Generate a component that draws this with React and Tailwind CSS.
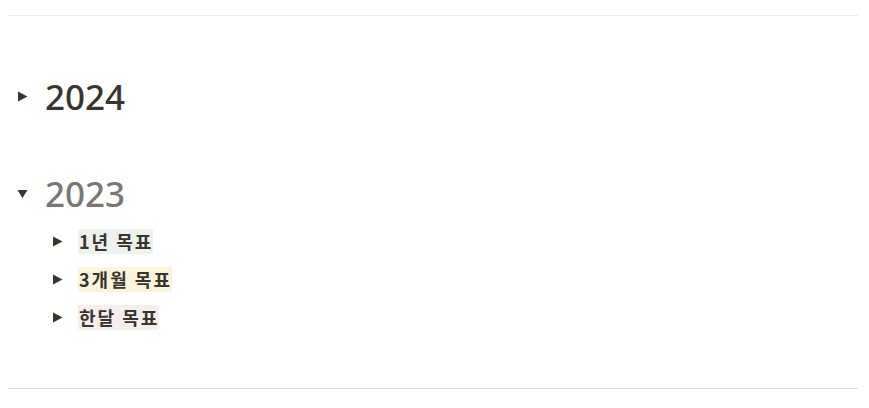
export default function App() {
  const Tri = ({ down }) => (
    <svg width="11" height="11" viewBox="0 0 11 11">
      {down ? <polygon points="0.5,2 10.5,2 5.5,10" fill="currentColor" /> : <polygon points="1,0.5 10.5,5.5 1,10.5" fill="currentColor" />}
    </svg>
  );
  const items = [
    { t: "1년 목표", bg: "bg-[#edf3ec]" },
    { t: "3개월 목표", bg: "bg-[#fbf3db]" },
    { t: "한달 목표", bg: "bg-[#f8eded]" },
  ];
  return (
    <div className="w-[869px] h-[408px] bg-white px-2 pt-[15px] overflow-hidden" style={{ fontFamily: '"Noto Sans", "Noto Sans CJK KR", sans-serif' }}>
      <div className="h-px w-[850px] bg-[#ececec]" />
      <div className="mt-[60px] h-10 flex items-center">
        <div className="w-[37px] flex justify-start pl-[9px] text-[#37352f]">
          <Tri />
        </div>
        <span className="text-[35px] font-medium text-[#37352f] leading-none">2024</span>
      </div>
      <div className="mt-[57px] h-10 flex items-center">
        <div className="w-[37px] flex justify-start pl-[9px] text-[#37352f]">
          <Tri down />
        </div>
        <span className="text-[35px] font-medium text-[#787774] leading-none">2023</span>
      </div>
      <div className="mt-[13px] flex flex-col gap-2 pl-[44px]">
        {items.map((it) => (
          <div key={it.t} className="h-[30px] flex items-center">
            <div className="w-[26px] text-[#37352f]">
              <Tri />
            </div>
            <span className={`${it.bg} text-[18px] font-bold text-[#37352f] leading-[25px] pl-[1px] pr-0 tracking-[2px]`} style={{ fontFamily: '"Noto Sans CJK KR", "Noto Sans", sans-serif' }}>{it.t}</span>
          </div>
        ))}
      </div>
      <div className="mt-[56px] h-px w-[850px] bg-[#d9d9d9]" />
    </div>
  );
}
